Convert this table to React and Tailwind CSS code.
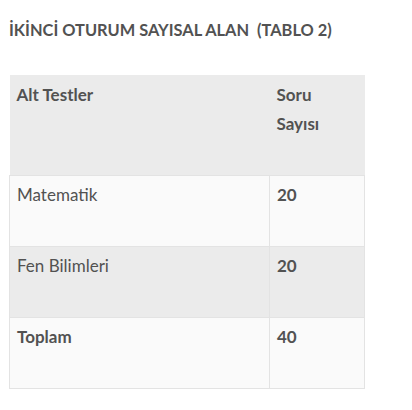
import React from "react";

const rows = [
  { name: "Matematik", count: "20", bg: "bg-[#fafafa]", bold: false },
  { name: "Fen Bilimleri", count: "20", bg: "bg-[#ebebeb]", bold: false },
  { name: "Toplam", count: "40", bg: "bg-[#fafafa]", bold: true },
];

export default function App() {
  return (
    <div className="min-h-[410px] bg-white px-[9px] pt-[18px] text-[#525252] font-['Lato',sans-serif]">
      <h3 className="text-[16.4px] font-bold leading-[24px] mb-[33px]">
        İKİNCİ OTURUM SAYISAL ALAN&nbsp; (TABLO 2)
      </h3>
      <table className="w-[356px] border-collapse text-[17px] leading-[29px]">
        <thead>
          <tr className="bg-[#ebebeb]">
            <th className="text-left font-bold align-top pl-[7px] pt-[5px] pb-[37px] w-[260px]">
              Alt Testler
            </th>
            <th className="text-left font-bold align-top pl-[7px] pt-[5px] pb-[37px]">
              Soru
              <br />
              Sayısı
            </th>
          </tr>
        </thead>
        <tbody>
          {rows.map((r) => (
            <tr key={r.name} className={r.bg}>
              <td
                className={`align-top pl-[7px] pt-[4px] pb-[37px] border border-[#e3e3e3] ${
                  r.bold ? "font-bold" : ""
                }`}
              >
                {r.name}
              </td>
              <td className="align-top pl-[7px] pt-[4px] pb-[37px] font-bold border border-[#e3e3e3]">
                {r.count}
              </td>
            </tr>
          ))}
        </tbody>
      </table>
    </div>
  );
}
